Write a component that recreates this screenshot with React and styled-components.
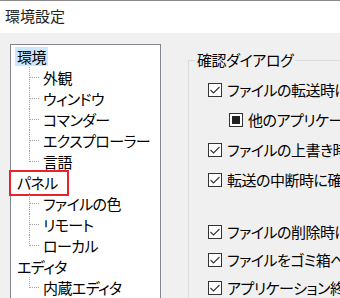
import styled, { createGlobalStyle } from 'styled-components';

const GlobalStyle = createGlobalStyle`
    html, body {
        margin: 0;
        padding: 0;
        width: 340px;
        height: 298px;
        overflow: hidden;
        background: #f0f0f0;
    }
    body {
        font-family: "Noto Sans CJK JP", "Noto Sans", sans-serif;
        font-feature-settings: "palt";
        color: #000;
    }
`;

const tree = [
    { label: '環境', selected: true, children: ['外観', 'ウィンドウ', 'コマンダー', 'エクスプローラー', '言語'] },
    { label: 'パネル', marked: true, children: ['ファイルの色', 'リモート', 'ローカル'] },
    { label: 'エディタ', children: ['内蔵エディタ'] },
];

const checks = [
    { text: 'ファイルの転送時に確認する', state: 'on', h: 30 },
    { text: '他のアプリケーションからのドロップ時', state: 'mixed', h: 30, indent: true },
    { text: 'ファイルの上書き時に確認する', state: 'on', h: 30 },
    { text: '転送の中断時に確認する', state: 'on', h: 30, gapAfter: 23 },
    { text: 'ファイルの削除時に確認する', state: 'on', h: 28 },
    { text: 'ファイルをゴミ箱へ移動時に確認する', state: 'on', h: 28 },
    { text: 'アプリケーション終了時に確認する', state: 'on', h: 28 },
];

const CheckBox = ({ state }) => (
    <Box>
        {state === 'on' && (
            <svg width="12" height="12" viewBox="0 0 12 12">
                <polyline points="1.5,6 4.5,9 10.5,3" fill="none" stroke="#333" strokeWidth="1.1" />
            </svg>
        )}
        {state === 'mixed' && <Fill />}
    </Box>
);

export default function App() {
    return (
        <Window>
            <GlobalStyle />
            <TitleBar>環境設定</TitleBar>
            <Body>
                <TreePanel>
                    {tree.map((node) => (
                        <div key={node.label}>
                            <RootRow>
                                <Label $selected={node.selected} $marked={node.marked}>{node.label}</Label>
                            </RootRow>
                            {node.children.map((c, i) => (
                                <ChildRow key={c} $last={i === node.children.length - 1}>
                                    <Label>{c}</Label>
                                </ChildRow>
                            ))}
                        </div>
                    ))}
                </TreePanel>
                <Group>
                    <Legend>確認ダイアログ</Legend>
                    <CheckList>
                        {checks.map((c) => (
                            <CheckRow key={c.text} $h={c.h} $indent={c.indent} $gap={c.gapAfter || 0}>
                                <CheckBox state={c.state} />
                                <CheckText>{c.text}</CheckText>
                            </CheckRow>
                        ))}
                    </CheckList>
                </Group>
            </Body>
        </Window>
    );
}

const Window = styled.div`
    width: 340px;
    height: 298px;
    display: flex;
    flex-direction: column;
    overflow: hidden;
`;

const TitleBar = styled.div`
    box-sizing: border-box;
    height: 33px;
    border-top: 1px solid #8a8a8a;
    background: #fff;
    padding: 0 0 4px 5px;
    display: flex;
    align-items: center;
    font-size: 15px;
    color: #222;
`;

const Body = styled.div`
    flex: 1;
    display: flex;
    align-items: flex-start;
    gap: 27px;
    padding: 11px 0 0 10px;
    overflow: hidden;
`;

const TreePanel = styled.div`
    box-sizing: border-box;
    flex: 0 0 151px;
    height: 280px;
    background: #fff;
    border: 1px solid #828790;
    padding: 1px 0 0 4px;
    font-size: 15px;
    letter-spacing: -0.6px;
`;

const RootRow = styled.div`
    height: 21px;
    display: flex;
    align-items: center;
`;

const ChildRow = styled.div`
    position: relative;
    height: 21px;
    display: flex;
    align-items: center;
    padding-left: 26px;

    &::before {
        content: '';
        position: absolute;
        left: 14px;
        top: 0;
        width: 1px;
        height: ${(p) => (p.$last ? '11px' : '100%')};
        background-image: linear-gradient(to bottom, #a0a0a0 50%, transparent 50%);
        background-size: 1px 2px;
    }

    &::after {
        content: '';
        position: absolute;
        left: 15px;
        top: 10px;
        width: 10px;
        height: 1px;
        background-image: linear-gradient(to right, #a0a0a0 50%, transparent 50%);
        background-size: 2px 1px;
    }
`;

const Label = styled.span`
    position: relative;
    line-height: 19px;
    padding: 0 2px;
    white-space: nowrap;
    background: ${(p) => (p.$selected ? '#cce8ff' : 'transparent')};

    ${(p) => p.$marked && `
        &::after {
            content: '';
            position: absolute;
            left: -6px;
            top: -3px;
            width: 56px;
            height: 22px;
            border: 2px solid #e8232b;
        }
    `}
`;

const Group = styled.fieldset`
    flex: 1 0 auto;
    min-width: 0;
    height: 260px;
    margin: 6px 0 0 0;
    padding: 5px 0 0 6px;
    border: 1px solid #dcdcdc;
    border-right: none;
`;

const Legend = styled.legend`
    padding: 0 2px;
    margin: 0;
    font-size: 15px;
    line-height: 20px;
    letter-spacing: -0.4px;
`;

const CheckList = styled.div`
    padding-left: 13px;
`;

const CheckRow = styled.div`
    height: ${(p) => p.$h}px;
    margin-bottom: ${(p) => p.$gap}px;
    padding-left: ${(p) => (p.$indent ? 21 : 0)}px;
    display: flex;
    align-items: center;
    gap: 5px;
    font-size: 15px;
    letter-spacing: -0.5px;
    white-space: nowrap;
`;

const Box = styled.span`
    box-sizing: border-box;
    flex: 0 0 14px;
    width: 14px;
    height: 14px;
    border: 1px solid #333;
    background: #fff;
    display: flex;
    align-items: center;
    justify-content: center;
`;

const Fill = styled.span`
    width: 8px;
    height: 8px;
    background: #222;
`;

const CheckText = styled.span`
    line-height: 20px;
`;
